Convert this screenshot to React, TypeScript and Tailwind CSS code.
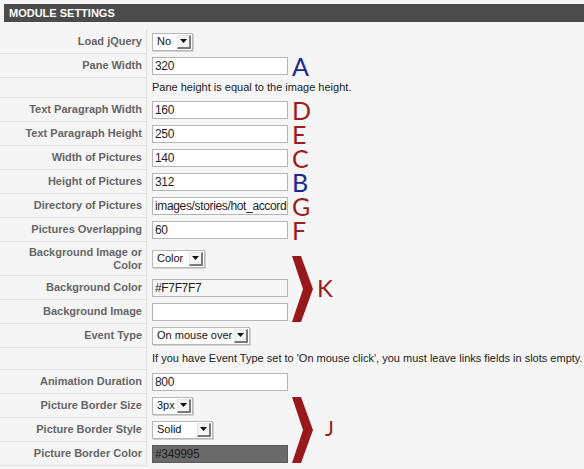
import React from "react";

const labelCls =
  "w-[147px] shrink-0 border-r border-b border-[#e1e1e1] flex items-center justify-end pr-[4px] text-right text-[11px] font-bold text-[#666] leading-[13px]";

function Row({
  label,
  h = "h-[24px]",
  children,
}: {
  label?: React.ReactNode;
  h?: string;
  children?: React.ReactNode;
}) {
  return (
    <div className={`flex ${h}`}>
      <div className={labelCls}>{label}</div>
      <div className="flex items-center pl-[5px] flex-1 pb-px">{children}</div>
    </div>
  );
}

function Input({
  value,
  variant = "white",
}: {
  value: string;
  variant?: "white" | "gray" | "dark";
}) {
  const bg =
    variant === "dark"
      ? "bg-[#6a6a6a] border-[#5a5a5a]"
      : variant === "gray"
      ? "bg-[#f6f6f6] border-[#b5b5b5]"
      : "bg-white border-[#b5b5b5]";
  return (
    <div
      className={`w-[136px] h-[18px] shrink-0 border ${bg} flex items-center pl-[2px] overflow-hidden whitespace-nowrap text-[12px] tracking-[-0.35px] text-[#1e1e1e]`}
    >
      {value}
    </div>
  );
}

function Select({ value, w }: { value: string; w: string }) {
  return (
    <div
      className={`${w} h-[18px] shrink-0 bg-white border border-[#b8b8b8] flex items-center justify-between pl-[4px] pr-[1px] text-[11px] text-[#111] shadow-[1px_1px_0_#d0d0d0] whitespace-nowrap overflow-hidden`}
    >
      <span>{value}</span>
      <div className="w-[14px] h-[14px] shrink-0 bg-[#f4f4f4] border-r-2 border-b-2 border-[#7a7a7a] border-l border-t border-l-[#e6e6e6] border-t-[#e6e6e6] flex items-center justify-center">
        <svg width="7" height="4" viewBox="0 0 7 4">
          <polygon points="0,0 7,0 3.5,4" fill="#111" />
        </svg>
      </div>
    </div>
  );
}

function Letter({ ch, color }: { ch: string; color: "red" | "blue" }) {
  return (
    <div
      className={`ml-[4px] h-[22px] flex items-center text-[25px] leading-[22px] font-normal ${
        color === "red" ? "text-[#9c1d1f]" : "text-[#1b2a8e]"
      }`}
      style={{ fontFamily: "Lato, 'DejaVu Sans', sans-serif" }}
    >
      {ch}
    </div>
  );
}

function Bracket({ className }: { className: string }) {
  return (
    <svg
      className={`absolute ${className}`}
      width="22"
      height="66"
      viewBox="0 0 22 66"
    >
      <polygon points="0,0 9,0 21,33 9,66 0,66 11,33" fill="#98191b" />
    </svg>
  );
}

export default function App() {
  return (
    <div
      className="relative w-[584px] h-[469px] bg-[#f5f5f5] overflow-hidden"
      style={{ fontFamily: "'Liberation Sans', Arial, sans-serif" }}
    >
      <div className="ml-[4px] mt-[4px] h-[18px] bg-[#4b4b4b] flex items-center pl-[5px] text-white text-[11px] font-bold">
        MODULE SETTINGS
      </div>
      <div className="mt-[8px]">
        <Row label="Load jQuery">
          <Select value="No" w="w-[41px]" />
        </Row>
        <Row label="Pane Width">
          <Input value="320" />
          <Letter ch="A" color="blue" />
        </Row>
        <Row h="h-[20px]">
          <span className="text-[11px] text-[#222]">
            Pane height is equal to the image height.
          </span>
        </Row>
        <Row label="Text Paragraph Width">
          <Input value="160" />
          <Letter ch="D" color="red" />
        </Row>
        <Row label="Text Paragraph Height">
          <Input value="250" />
          <Letter ch="E" color="red" />
        </Row>
        <Row label="Width of Pictures">
          <Input value="140" />
          <Letter ch="C" color="red" />
        </Row>
        <Row label="Height of Pictures">
          <Input value="312" />
          <Letter ch="B" color="blue" />
        </Row>
        <Row label="Directory of Pictures">
          <Input value="images/stories/hot_accordi" />
          <Letter ch="G" color="red" />
        </Row>
        <Row label="Pictures Overlapping">
          <Input value="60" />
          <Letter ch="F" color="red" />
        </Row>
        <Row
          h="h-[34px]"
          label={
            <span>
              Background Image or
              <br />
              Color
            </span>
          }
        >
          <Select value="Color" w="w-[53px]" />
        </Row>
        <Row label="Background Color">
          <Input value="#F7F7F7" variant="gray" />
        </Row>
        <Row label="Background Image">
          <Input value="" />
        </Row>
        <Row label="Event Type">
          <Select value="On mouse over" w="w-[98px]" />
        </Row>
        <Row h="h-[22px]">
          <span className="text-[11px] text-[#222] whitespace-nowrap">
            If you have Event Type set to 'On mouse click', you must leave links
            fields in slots empty.
          </span>
        </Row>
        <Row label="Animation Duration">
          <Input value="800" />
        </Row>
        <Row label="Picture Border Size">
          <Select value="3px" w="w-[41px]" />
        </Row>
        <Row label="Picture Border Style">
          <Select value="Solid" w="w-[61px]" />
        </Row>
        <Row label="Picture Border Color">
          <Input value="#349995" variant="dark" />
        </Row>
      </div>

      <Bracket className="left-[292px] top-[256px]" />
      <span
        className="absolute left-[317px] top-[276px] text-[24px] leading-none text-[#9c1d1f]"
        style={{ fontFamily: "Lato, 'DejaVu Sans', sans-serif" }}
      >
        K
      </span>
      <Bracket className="left-[292px] top-[397px]" />
      <span
        className="absolute left-[325px] top-[417px] text-[21px] leading-none text-[#9c1d1f]"
        style={{ fontFamily: "Lato, 'DejaVu Sans', sans-serif" }}
      >
        J
      </span>
    </div>
  );
}
